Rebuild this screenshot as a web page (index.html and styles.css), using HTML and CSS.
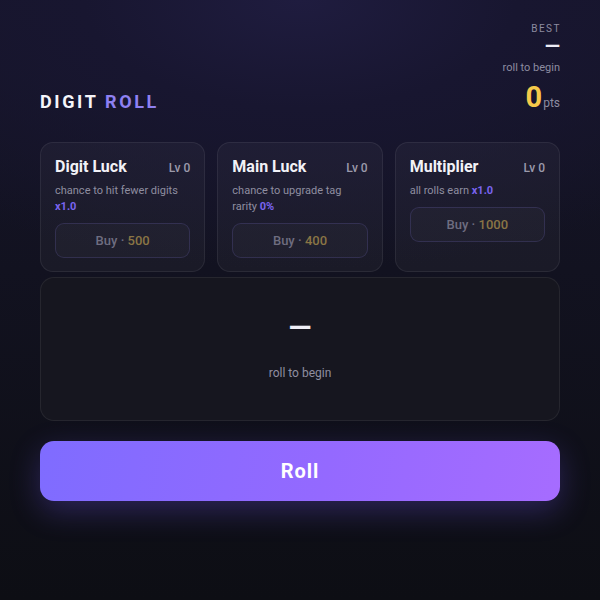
FILE: index.html
```html
<!DOCTYPE html>
<html>
<head>
<meta charset="utf-8">
<link rel="stylesheet" href="styles.css">
</head>
<body>
<div class="app">
  <header class="header">
    <h1 class="title">DIGIT <span class="accent">ROLL</span></h1>
    <div class="stats">
      <div class="best-label">BEST</div>
      <div class="best-value">—</div>
      <div class="best-sub">roll to begin</div>
      <div class="points"><span class="pts-num">0</span><span class="pts-unit">pts</span></div>
    </div>
  </header>

  <section class="upgrades">
    <div class="card">
      <div class="card-head"><span class="card-title">Digit Luck</span><span class="lv">Lv 0</span></div>
      <p class="desc">chance to hit fewer digits <b class="val">x1.0</b></p>
      <button class="buy">Buy · <span class="cost">500</span></button>
    </div>
    <div class="card">
      <div class="card-head"><span class="card-title">Main Luck</span><span class="lv">Lv 0</span></div>
      <p class="desc">chance to upgrade tag rarity <b class="val">0%</b></p>
      <button class="buy">Buy · <span class="cost">400</span></button>
    </div>
    <div class="card">
      <div class="card-head"><span class="card-title">Multiplier</span><span class="lv">Lv 0</span></div>
      <p class="desc">all rolls earn <b class="val">x1.0</b></p>
      <button class="buy">Buy · <span class="cost">1000</span></button>
    </div>
  </section>

  <section class="display">
    <div class="display-value">—</div>
    <div class="display-sub">roll to begin</div>
  </section>

  <button class="roll">Roll</button>
</div>
</body>
</html>
```
FILE: styles.css
```css
* { box-sizing: border-box; }
html, body { margin: 0; height: 100%; }
body {
  font-family: Roboto, "Liberation Sans", sans-serif;
  background: radial-gradient(ellipse 90% 45% at 50% 0%, #1f1c3f 0%, #181630 40%, rgba(14,14,22,0) 100%), linear-gradient(#16152a 0%, #121220 45%, #0d0e14 100%);
  color: #fff;
}
.app {
  padding: 22px 40px 0;
  display: flex;
  flex-direction: column;
}
.header {
  display: flex;
  justify-content: space-between;
  align-items: flex-start;
  height: 120px;
}
.title {
  margin: 69px 0 0;
  font-size: 18px;
  font-weight: 700;
  letter-spacing: 2.6px;
  color: #f4f4fa;
  line-height: 22px;
}
.accent { color: #8e80f2; }
.stats {
  display: flex;
  flex-direction: column;
  align-items: flex-end;
  text-align: right;
}
.best-label {
  font-size: 10px;
  letter-spacing: 1.5px;
  color: #8d8ca0;
  line-height: 14px;
  margin-right: -1px;
}
.best-value {
  font-size: 20px;
  font-weight: 700;
  line-height: 20px;
  color: #ecebf5;
}
.best-sub {
  font-size: 11px;
  color: #8d8ca0;
  line-height: 14px;
  margin-top: 5px;
}
.points {
  margin-top: 7px;
  line-height: 30px;
}
.pts-num {
  font-size: 29px;
  font-weight: 700;
  color: #f5c94a;
}
.pts-unit {
  font-size: 12px;
  color: #8d8ca0;
  margin-left: 1px;
}
.upgrades {
  display: grid;
  grid-template-columns: repeat(3, 1fr);
  gap: 12px;
}
.card {
  background: rgba(255,255,255,0.035);
  border: 1px solid rgba(255,255,255,0.07);
  border-radius: 13px;
  padding: 14px 14px 14px;
  height: 130px;
}
.card-head {
  display: flex;
  justify-content: space-between;
  align-items: baseline;
}
.card-title {
  font-size: 16px;
  font-weight: 700;
  color: #f2f2f7;
}
.lv {
  font-size: 12px;
  font-weight: 500;
  color: #9b9aab;
}
.desc {
  margin: 7px 0 8px;
  font-size: 11px;
  line-height: 16px;
  color: #8f8ea0;
}
.val { color: #7a64f0; font-weight: 700; }
.buy {
  display: block;
  width: 100%;
  height: 35px;
  border-radius: 9px;
  border: 1px solid rgba(120,110,200,0.22);
  background: rgba(255,255,255,0.025);
  font-family: inherit;
  font-size: 13px;
  font-weight: 500;
  color: #6e6d80;
}
.cost { color: #8a7545; }
.display {
  margin-top: 5px;
  height: 144px;
  border-radius: 14px;
  background: #16161f;
  border: 1px solid rgba(255,255,255,0.07);
  display: flex;
  flex-direction: column;
  align-items: center;
}
.display-value {
  margin-top: 30px;
  font-size: 30px;
  font-weight: 700;
  color: #eeeef6;
  line-height: 40px;
}
.display-sub {
  margin-top: 18px;
  font-size: 12px;
  color: #8f8ea0;
}
.roll {
  margin-top: 20px;
  height: 60px;
  border: none;
  border-radius: 14px;
  background: linear-gradient(100deg, #7f6cff 0%, #9469ff 55%, #a66cff 100%);
  box-shadow: 0 10px 30px rgba(120, 90, 255, 0.28);
  font-family: inherit;
  font-size: 20px;
  font-weight: 700;
  letter-spacing: 1px;
  color: #fff;
}
```
